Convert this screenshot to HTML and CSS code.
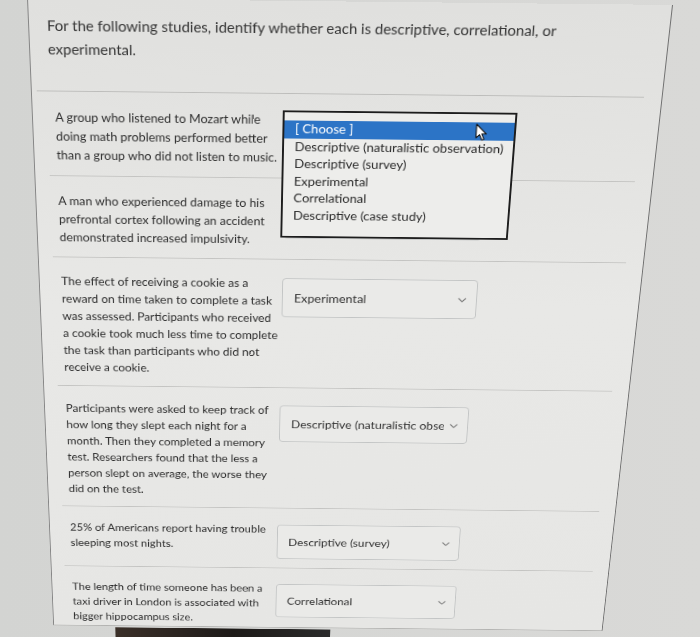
FILE: index.html
```html
<!DOCTYPE html>
<html lang="en">
<head>
<meta charset="utf-8">
<title>Quiz question</title>
<link rel="stylesheet" href="styles.css">
</head>
<body>
<div class="screen">
  <div class="card">
    <div class="question-header">
      <p class="question-text">For the following studies, identify whether each is descriptive, correlational, or experimental.</p>
    </div>
    <div class="answers">
      <div class="answer">
        <div class="answer-text">A group who listened to Mozart while doing math problems performed better than a group who did not listen to music.</div>
        <div class="select-wrap">
          <div class="select"><span class="select-value">[ Choose ]</span><svg class="chevron" width="10" height="6" viewBox="0 0 10 6"><polyline points="1,1 5,5 9,1"/></svg></div>
          <ul class="select-list">
            <li class="option selected">[ Choose ]</li>
            <li class="option">Descriptive (naturalistic observation)</li>
            <li class="option">Descriptive (survey)</li>
            <li class="option">Experimental</li>
            <li class="option">Correlational</li>
            <li class="option">Descriptive (case study)</li>
            <li class="cursor"><svg width="13" height="20" viewBox="0 0 13 20"><path d="M1 1 L1 16 L4.6 12.6 L7.2 18.6 L9.4 17.6 L6.9 11.8 L11.6 11.8 Z"/></svg></li>
          </ul>
        </div>
      </div>
      <div class="answer">
        <div class="answer-text">A man who experienced damage to his prefrontal cortex following an accident demonstrated increased impulsivity.</div>
        <div class="select-wrap">
          <div class="select"><span class="select-value">[ Choose ]</span><svg class="chevron" width="10" height="6" viewBox="0 0 10 6"><polyline points="1,1 5,5 9,1"/></svg></div>
        </div>
      </div>
      <div class="answer">
        <div class="answer-text">The effect of receiving a cookie as a reward on time taken to complete a task was assessed. Participants who received a cookie took much less time to complete the task than participants who did not receive a cookie.</div>
        <div class="select-wrap">
          <div class="select"><span class="select-value">Experimental</span><svg class="chevron" width="10" height="6" viewBox="0 0 10 6"><polyline points="1,1 5,5 9,1"/></svg></div>
        </div>
      </div>
      <div class="answer">
        <div class="answer-text">Participants were asked to keep track of how long they slept each night for a month. Then they completed a memory test. Researchers found that the less a person slept on average, the worse they did on the test.</div>
        <div class="select-wrap">
          <div class="select"><span class="select-value">Descriptive (naturalistic observation)</span><svg class="chevron" width="10" height="6" viewBox="0 0 10 6"><polyline points="1,1 5,5 9,1"/></svg></div>
        </div>
      </div>
      <div class="answer">
        <div class="answer-text">25% of Americans report having trouble sleeping most nights.</div>
        <div class="select-wrap">
          <div class="select"><span class="select-value">Descriptive (survey)</span><svg class="chevron" width="10" height="6" viewBox="0 0 10 6"><polyline points="1,1 5,5 9,1"/></svg></div>
        </div>
      </div>
      <div class="answer">
        <div class="answer-text">The length of time someone has been a taxi driver in London is associated with bigger hippocampus size.</div>
        <div class="select-wrap">
          <div class="select"><span class="select-value">Correlational</span><svg class="chevron" width="10" height="6" viewBox="0 0 10 6"><polyline points="1,1 5,5 9,1"/></svg></div>
        </div>
      </div>
    </div>
  </div>
  <div class="below"></div>
</div>
</body>
</html>
```

FILE: styles.css
```css
* { box-sizing: border-box; }

html, body {
  margin: 0;
  height: 100%;
  overflow: hidden;
}

html {
  background: linear-gradient(90deg, #d3d4d2 0%, #d9d9d7 100%);
}

body {
  font-family: Lato, "Noto Sans", sans-serif;
  color: #2f2f2f;
}

.screen {
  width: 700px;
  transform-origin: 202px 0;
  transform: skewY(0.6deg) perspective(1200px) rotateX(-16deg);
}

.card {
  margin-left: 27px;
  width: 646px;
  padding: 16px 0 0 0;
  background: linear-gradient(180deg, #e0e0de 0%, #e8e8e6 45%, #e6e6e4 100%);
  border-left: 1px solid #858585;
  border-right: 1px solid #707070;
  border-bottom: 1px solid #b3b3b1;
}

.question-header {
  margin-left: 5px;
  width: 621px;
  padding: 0 0 32px 13px;
  border-bottom: 1px solid #bdbdbb;
}

.question-text {
  margin: 0;
  width: 560px;
  font-size: 15px;
  line-height: 25px;
  color: #353535;
}

.answers {
  margin-left: 15px;
  width: 611px;
}

.answer {
  display: flex;
  align-items: flex-start;
  padding: 18px 0 12px 8px;
  border-bottom: 1px solid #c4c4c2;
}

.answer:last-child {
  border-bottom: none;
  padding-bottom: 2px;
}

.answer-text {
  flex: none;
  width: 234px;
  font-size: 12.85px;
  line-height: 21px;
}

.select-wrap {
  position: relative;
  flex: none;
  width: 210px;
  margin: 4px 0 0 3px;
}

.select {
  display: flex;
  align-items: center;
  height: 47px;
  padding: 0 10px 0 12px;
  border: 1px solid #c3c5c5;
  border-radius: 4px;
  background: #eaeae8;
  font-size: 13.5px;
  color: #333333;
}

.select-value {
  flex: 1;
  min-width: 0;
  margin-right: 6px;
  white-space: nowrap;
  overflow: hidden;
}

.chevron {
  flex: none;
  fill: none;
  stroke: #7a7a7a;
  stroke-width: 1.2;
}

.select-list {
  position: absolute;
  top: -4px;
  left: -3px;
  z-index: 2;
  width: 241px;
  margin: 0;
  padding: 9px 0 14px;
  list-style: none;
  border: 2px solid #1d1d1d;
  background: #ededeb;
  font-size: 13.5px;
  color: #2a2a2a;
}

.option {
  height: 19.5px;
  line-height: 19.5px;
  padding-left: 11px;
  white-space: nowrap;
}

.option.selected {
  background: #2c74c6;
  color: #ffffff;
}

.cursor {
  position: absolute;
  left: 197px;
  top: 10px;
  width: 13px;
  height: 20px;
}

.cursor svg {
  display: block;
  fill: #ffffff;
  stroke: #111111;
  stroke-width: 1.1;
  stroke-linejoin: round;
}

.below {
  margin: 2px 0 0 100px;
  width: 253px;
  height: 30px;
  background: linear-gradient(90deg, #3b3029 0%, #1d1a18 55%, #2b2b2b 100%);
}
```
